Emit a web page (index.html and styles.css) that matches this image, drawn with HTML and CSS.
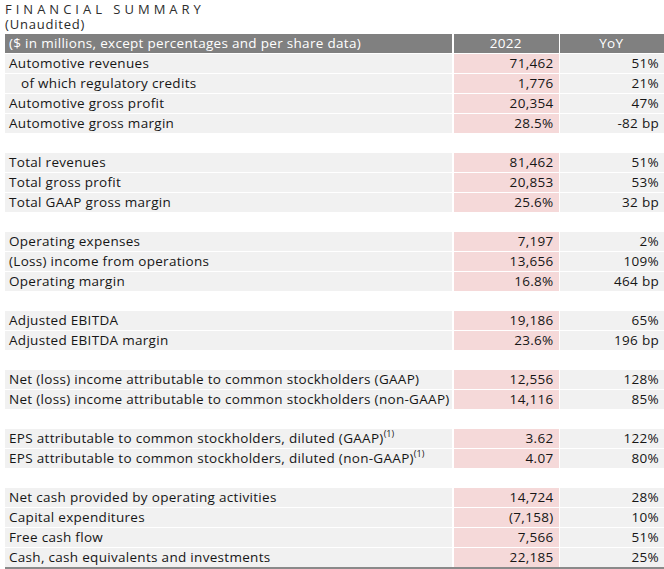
FILE: index.html
```html
<!DOCTYPE html>
<html>
<head>
<meta charset="utf-8">
<link rel="stylesheet" href="styles.css">
</head>
<body>
<div class="page">
  <div class="title">FINANCIAL SUMMARY</div>
  <div class="subtitle">(Unaudited)</div>
  <table class="fin">
    <colgroup><col class="c-label"><col class="c-val"><col class="c-yoy"></colgroup>
    <thead>
      <tr><th class="h-label">($ in millions, except percentages and per share data)</th><th>2022</th><th>YoY</th></tr>
    </thead>
    <tbody>
      <tr><td>Automotive revenues</td><td class="v">71,462</td><td class="y">51%</td></tr>
      <tr><td class="indent">of which regulatory credits</td><td class="v">1,776</td><td class="y">21%</td></tr>
      <tr><td>Automotive gross profit</td><td class="v">20,354</td><td class="y">47%</td></tr>
      <tr><td>Automotive gross margin</td><td class="v">28.5%</td><td class="y">-82 bp</td></tr>
      <tr class="sp"><td colspan="3"></td></tr>
      <tr><td>Total revenues</td><td class="v">81,462</td><td class="y">51%</td></tr>
      <tr><td>Total gross profit</td><td class="v">20,853</td><td class="y">53%</td></tr>
      <tr><td>Total GAAP gross margin</td><td class="v">25.6%</td><td class="y">32 bp</td></tr>
      <tr class="sp"><td colspan="3"></td></tr>
      <tr><td>Operating expenses</td><td class="v">7,197</td><td class="y">2%</td></tr>
      <tr><td>(Loss) income from operations</td><td class="v">13,656</td><td class="y">109%</td></tr>
      <tr><td>Operating margin</td><td class="v">16.8%</td><td class="y">464 bp</td></tr>
      <tr class="sp"><td colspan="3"></td></tr>
      <tr><td>Adjusted EBITDA</td><td class="v">19,186</td><td class="y">65%</td></tr>
      <tr><td>Adjusted EBITDA margin</td><td class="v">23.6%</td><td class="y">196 bp</td></tr>
      <tr class="sp"><td colspan="3"></td></tr>
      <tr><td>Net (loss) income attributable to common stockholders (GAAP)</td><td class="v">12,556</td><td class="y">128%</td></tr>
      <tr><td>Net (loss) income attributable to common stockholders (non-GAAP)</td><td class="v">14,116</td><td class="y">85%</td></tr>
      <tr class="sp"><td colspan="3"></td></tr>
      <tr><td>EPS attributable to common stockholders, diluted (GAAP)<sup>(1)</sup></td><td class="v">3.62</td><td class="y">122%</td></tr>
      <tr><td>EPS attributable to common stockholders, diluted (non-GAAP)<sup>(1)</sup></td><td class="v">4.07</td><td class="y">80%</td></tr>
      <tr class="sp"><td colspan="3"></td></tr>
      <tr><td>Net cash provided by operating activities</td><td class="v">14,724</td><td class="y">28%</td></tr>
      <tr><td>Capital expenditures</td><td class="v">(7,158)</td><td class="y">10%</td></tr>
      <tr><td>Free cash flow</td><td class="v">7,566</td><td class="y">51%</td></tr>
      <tr class="last"><td>Cash, cash equivalents and investments</td><td class="v">22,185</td><td class="y">25%</td></tr>
    </tbody>
  </table>
</div>
</body>
</html>
```

FILE: styles.css
```css
html, body {
  margin: 0;
  padding: 0;
  background: #ffffff;
}

body {
  font-family: "Open Sans", "Liberation Sans", sans-serif;
  color: #161616;
}

.page {
  padding: 2px 0 0 5px;
}

.title {
  font-size: 13px;
  line-height: 15px;
  letter-spacing: 4px;
  color: #2e2e2e;
}

.subtitle {
  font-size: 13px;
  line-height: 14px;
  letter-spacing: 0.8px;
  color: #2a2a2a;
}

.fin {
  margin-top: 2px;
  width: 659px;
  border-collapse: collapse;
  table-layout: fixed;
  font-size: 13.5px;
  letter-spacing: 0.3px;
}

.c-label { width: 448px; }
.c-val { width: 106px; }
.c-yoy { width: 105px; }

.fin th,
.fin td {
  height: 19px;
  padding: 0 5px 0 4px;
  border-top: 1px solid #fff;
  white-space: nowrap;
  line-height: 19px;
  background: #f1f1f1;
  font-weight: normal;
}

.fin th {
  background: #808080;
  color: #fff;
  text-align: center;
  border-left: 2px solid #fff;
}

.fin th.h-label {
  text-align: left;
  border-left: none;
}

.fin td.v {
  background: #f5d9d9;
  text-align: right;
  border-left: 2px solid #fff;
}

.fin td.y {
  text-align: right;
  border-left: 1px solid #fff;
}

.fin th:last-child {
  border-left-width: 1px;
}

.fin td.indent {
  padding-left: 16px;
}

.fin tr.sp td {
  height: 18px;
  background: #fff;
}

.fin tr.last td {
  border-bottom: 2px solid #8a8a8a;
}

.fin sup {
  font-size: 9px;
  line-height: 0;
  vertical-align: 6px;
  letter-spacing: 0;
}
```
